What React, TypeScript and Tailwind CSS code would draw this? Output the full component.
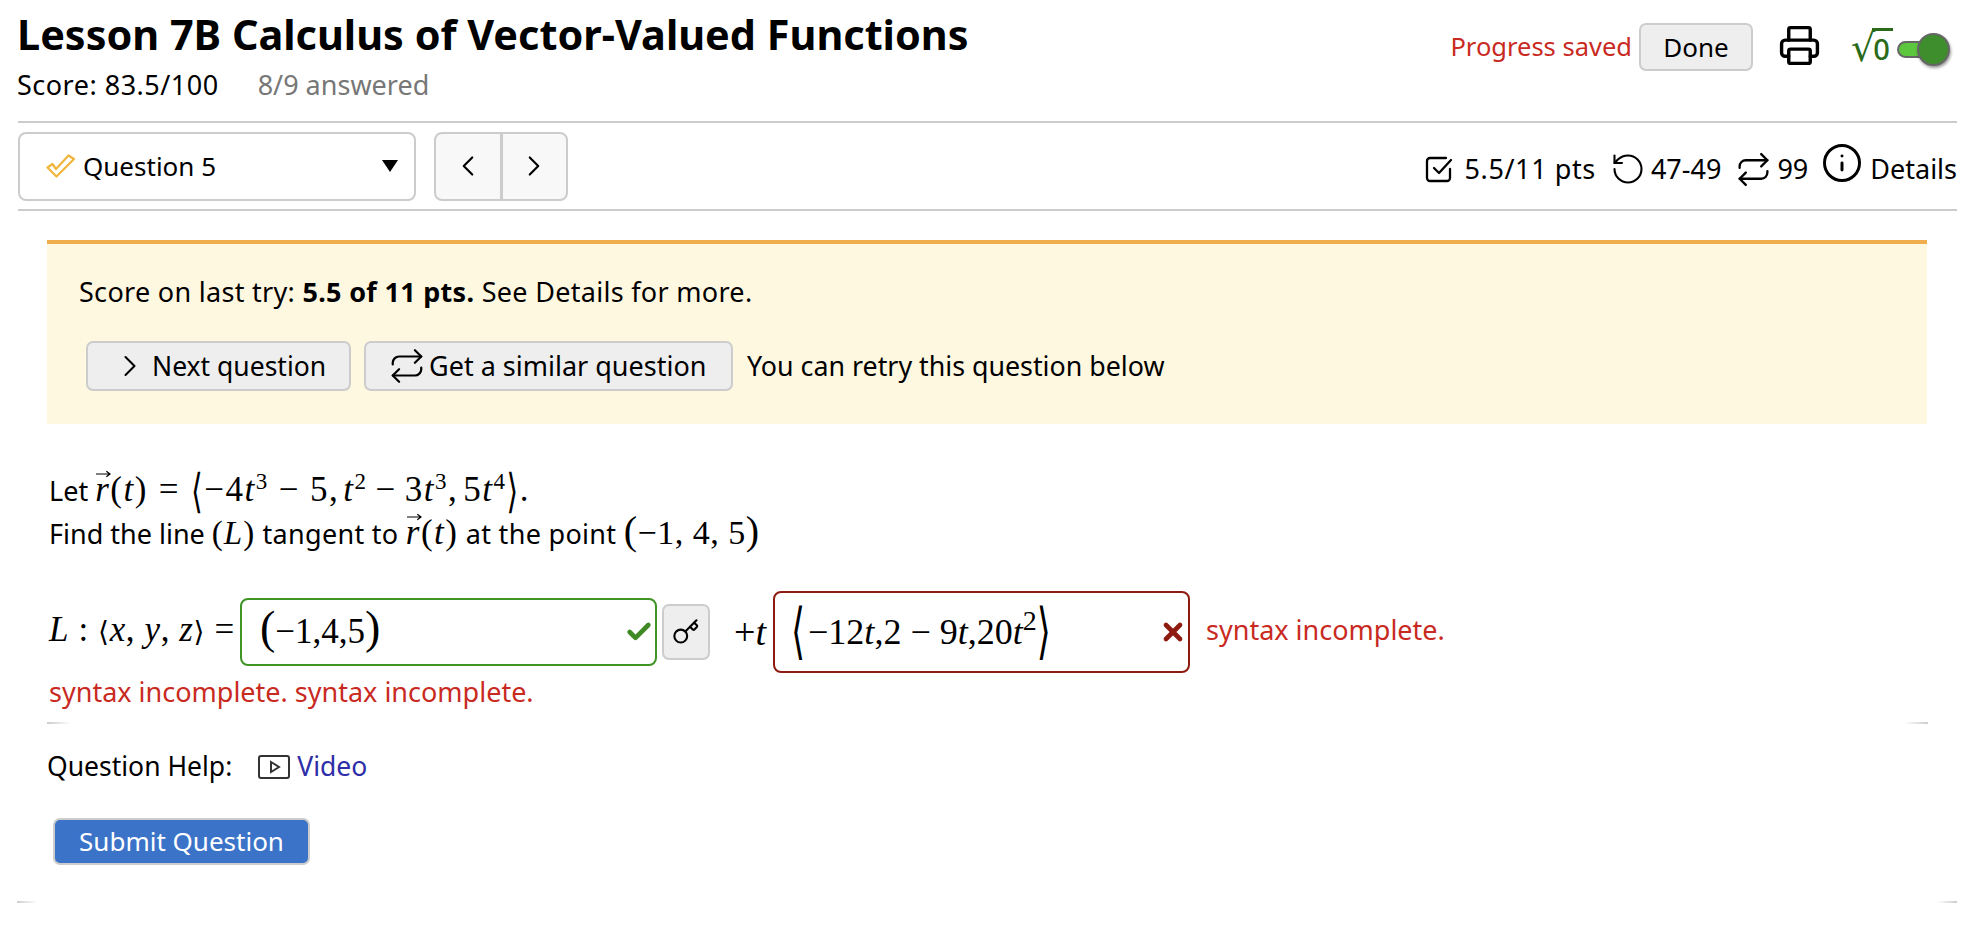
import React from 'react';
import { ChevronLeft, ChevronRight, Printer, RotateCcw, Repeat, Info, Check, X, Key } from 'lucide-react';

const sans = "font-['Noto_Sans','Lato',sans-serif]";
const serif = "font-['Liberation_Serif','DejaVu_Serif',serif]";

function I({ children }: { children: React.ReactNode }) {
  return <span className="italic">{children}</span>;
}

function VecR() {
  return (
    <span className="relative inline-block italic">
      r
      <svg viewBox="0 0 16 8" className="absolute left-[1px] top-[1px] w-[15px] h-[8px]" fill="none" stroke="currentColor" strokeWidth="1.3">
        <path d="M0 4h15M11 1l4 3-4 3" />
      </svg>
    </span>
  );
}

function Sup({ children }: { children: React.ReactNode }) {
  return <sup className="relative top-[-12px] align-baseline text-[23px] leading-none">{children}</sup>;
}

// tall thin angle bracket, scaled from the font glyph
function Angle({ ch, className }: { ch: string; className: string }) {
  return <span className={`inline-block font-['DejaVu_Sans',sans-serif] leading-none origin-center ${className}`}>{ch}</span>;
}

function Btn({ className, children }: { className: string; children: React.ReactNode }) {
  return (
    <button className={`flex items-center border-2 border-[#ccc] bg-[#eee] rounded-[7px] text-black ${className}`}>
      {children}
    </button>
  );
}

export default function App() {
  return (
    <div className={`${sans} bg-white text-black w-[1974px] h-[942px] overflow-hidden pl-[18px] pr-[17px] text-[27px]`}>
      {/* top */}
      <div className="flex justify-between h-[121px]">
        <div>
          <h1 className="text-[41.4px] font-bold leading-[48px] pt-[10px] h-[60px] whitespace-nowrap -ml-[1px]">Lesson 7B Calculus of Vector-Valued Functions</h1>
          <div className="flex mt-[10px] leading-[30px]">
            <span className="tracking-[0.5px] -ml-[1px]">Score: 83.5/100</span>
            <span className="ml-[39px] text-[#777]">8/9 answered</span>
          </div>
        </div>
        <div className="flex items-start pt-[23px] justify-end pr-[27px]">
          <span className="text-[#c92a1f] text-[25.5px] leading-[46px]">Progress saved</span>
          <Btn className="ml-[7px] w-[114px] h-[48px] justify-center text-[26px]">Done</Btn>
          <Printer className="ml-[25px] mt-[1px] w-[43px] h-[43px]" strokeWidth={1.9} />
          <div className="ml-[32px] mt-[5px] flex items-start text-[#2a6a18] w-[40px] h-[36px]">
            <span className="font-['DejaVu_Sans',sans-serif] text-[38px] leading-[40px] -ml-[2px]">√</span>
            <span className="ml-[-3px] border-t-[3px] border-[#2a6a18] w-[21px] pl-[1px] font-medium text-[29px] leading-[36px]">0</span>
          </div>
          <div className="relative ml-[4px] mt-[18px] w-[33px] h-[17px] rounded-full bg-[#5cc63c] border-2 border-[#666]">
            <div className="absolute left-[18px] top-[-10px] w-[33px] h-[33px] rounded-full bg-[#3e8e2e] border-2 border-[#666] shadow-[1px_2px_3px_rgba(0,0,0,0.4)]" />
          </div>
        </div>
      </div>
      {/* question nav */}
      <div className="flex justify-between items-center h-[90px] border-y-2 border-[#ccc]">
        <div className="flex items-center">
          <div className="flex items-center w-[398px] h-[69px] border-2 border-[#ccc] rounded-[8px] pl-[26px] pr-[16px] text-[26px]">
            <svg viewBox="0 0 30 24" className="w-[30px] h-[24px]" fill="none" stroke="#f0b63c" strokeWidth="2.2" strokeLinejoin="round">
              <path d="M1.5 13.5l5-3.5 3.5 5L22.5 1.5l5.5 3.5L10.5 22.5z" />
            </svg>
            <span className="ml-[7px]">Question 5</span>
            <span className="ml-auto w-0 h-0 border-x-[8px] border-x-transparent border-t-[12px] border-t-black" />
          </div>
          <div className="flex ml-[18px] h-[69px] w-[134px] border-2 border-[#ccc] rounded-[8px] bg-[#f8f8f8]">
            <div className="flex-1 flex items-center justify-center border-r-[3px] border-[#ccc]">
              <ChevronLeft className="w-[34px] h-[34px]" strokeWidth={1.5} />
            </div>
            <div className="flex-1 flex items-center justify-center">
              <ChevronRight className="w-[34px] h-[34px]" strokeWidth={1.5} />
            </div>
          </div>
        </div>
        <div className="flex items-center leading-[30px] pt-[6px]">
          <svg viewBox="0 0 28 28" className="w-[28px] h-[28px]" fill="none" stroke="currentColor" strokeWidth="2.3" strokeLinecap="round" strokeLinejoin="round">
            <path d="M25 14v9a3 3 0 0 1-3 3H5a3 3 0 0 1-3-3V6a3 3 0 0 1 3-3h16" />
            <path d="M9 13l5 5L26 5" />
          </svg>
          <span className="ml-[12px] tracking-[0.6px]">5.5/11 pts</span>
          <RotateCcw className="ml-[14px] w-[36px] h-[36px]" strokeWidth={1.4} />
          <span className="ml-[5px]">47-49</span>
          <Repeat className="ml-[14px] w-[37px] h-[37px]" strokeWidth={1.5} />
          <span className="ml-[5px]">99</span>
          <Info className="ml-[13px] w-[42px] h-[42px] mt-[-12px]" strokeWidth={1.7} />
          <span className="ml-[7px]">Details</span>
        </div>
      </div>
      {/* score alert */}
      <div className="ml-[29px] mr-[30px] mt-[29px] h-[184px] border-t-4 border-[#f0ad4e] bg-[#fff8e0]">
        <div className="pl-[32px] pt-[30px] leading-[36px] tracking-[0.3px]">
          Score on last try: <b className="font-bold">5.5 of 11 pts.</b> See Details for more.
        </div>
        <div className="flex items-center mt-[31px] pl-[39px]">
          <Btn className="w-[265px] h-[50px] pl-[24px] text-[26.5px]">
            <ChevronRight className="w-[36px] h-[36px]" strokeWidth={1.4} />
            <span className="ml-[4px] pt-[1px]">Next question</span>
          </Btn>
          <Btn className="ml-[13px] w-[369px] h-[50px] pl-[22px]">
            <Repeat className="w-[38px] h-[38px] shrink-0" strokeWidth={1.4} />
            <span className="ml-[3px]">Get a similar question</span>
          </Btn>
          <span className="ml-[14px] text-[26.8px]">You can retry this question below</span>
        </div>
      </div>
      {/* question */}
      <div className="mx-[29px]">
        <div className="pl-[2px] pt-[45px] leading-[42px]">
          <div className="flex items-baseline h-[42px]">
            <span>Let</span>
            <span className={`${serif} ml-[7px] text-[35px] tracking-[1.5px] whitespace-pre`}>
              <VecR />(<I>t</I>)
              <span className="ml-[11px]">=</span>
              <Angle ch="⟨" className="ml-[11px] text-[30px] scale-y-[1.55]" />
              −4<I>t</I><Sup>3</Sup>
              <span className="mx-[10px]">−</span>
              5,<span className="ml-[4px]" /><I>t</I><Sup>2</Sup>
              <span className="mx-[8px]">−</span>
              3<I>t</I><Sup>3</Sup>,<span className="ml-[5px]" />5<I>t</I><Sup>4</Sup>
              <Angle ch="⟩" className="text-[30px] scale-y-[1.55]" />.
            </span>
          </div>
          <div className="flex items-baseline h-[42px] whitespace-pre">
            <span>Find the line </span>
            <span className={`${serif} text-[33px] tracking-[1px]`}>(<I>L</I>)</span>
            <span className="tracking-[0.3px]"> tangent to </span>
            <span className={`${serif} text-[35px] tracking-[1.5px]`}><VecR />(<I>t</I>)</span>
            <span className="tracking-[0.3px]"> at the point </span>
            <span className={`${serif} text-[34px] tracking-[0.5px]`}><span className="text-[40px] leading-none">(</span>−1, 4, 5<span className="text-[40px] leading-none">)</span></span>
          </div>
        </div>
        <div className="flex items-center mt-[38px] h-[82px] pl-[2px]">
          <span className={`${serif} text-[35px] whitespace-pre w-[191px] tracking-[0.6px] mb-[4px]`}>
            <I>L</I> : <span className="font-['DejaVu_Sans',sans-serif] text-[28px]">⟨</span><I>x</I>, <I>y</I>, <I>z</I><span className="font-['DejaVu_Sans',sans-serif] text-[28px]">⟩</span> =
          </span>
          <div className={`${serif} flex items-center w-[417px] h-[68px] border-2 border-[#3f9426] rounded-[8px] pl-[18px] pr-[2px] text-[35px] whitespace-pre`}>
            <span><span className="text-[46px] leading-none">(</span>−1,4,5<span className="text-[46px] leading-none">)</span></span>
            <Check className="ml-auto w-[28px] h-[28px] text-[#3f8a24]" strokeWidth={4} />
          </div>
          <div className="flex items-center justify-center ml-[5px] w-[48px] h-[56px] border-2 border-[#ccc] bg-[#eee] rounded-[7px]">
            <Key className="w-[28px] h-[28px]" strokeWidth={1.8} />
          </div>
          <span className={`${serif} ml-[24px] text-[38px] whitespace-pre w-[39px]`}>+<I>t</I></span>
          <div className={`${serif} flex items-center w-[417px] h-[82px] border-2 border-[#8e1a10] rounded-[8px] pl-[16px] pr-[1px] text-[36px] whitespace-pre`}>
            <span>
              <Angle ch="⟨" className="mr-[3px] text-[36px] scale-y-[1.7]" />
              −12<I>t</I>,2 − 9<I>t</I>,20<I>t</I><sup className="text-[28px] leading-none">2</sup>
              <Angle ch="⟩" className="text-[36px] scale-y-[1.7]" />
            </span>
            <X className="ml-auto w-[28px] h-[28px] text-[#8e1a10]" strokeWidth={4} />
          </div>
          <span className="ml-[16px] mb-[3px] text-[#c92a1f]">syntax incomplete.</span>
        </div>
        <div className="pl-[2px] mt-[1px] leading-[36px] text-[#c92a1f]">syntax incomplete. syntax incomplete.</div>
        <div className="flex justify-between mt-[12px] h-[2px]">
          <div className="w-[24px] bg-gradient-to-r from-[#ccc] to-white" />
          <div className="w-[24px] bg-gradient-to-l from-[#ccc] to-white" />
        </div>
        <div className="flex items-center mt-[27px] h-[32px] text-[26.5px]">
          <span>Question Help:</span>
          <svg viewBox="0 0 32 24" className="ml-[26px] w-[32px] h-[24px]" fill="none" stroke="#333" strokeWidth="2">
            <rect x="1" y="1" width="30" height="22" rx="2" />
            <path d="M13 7l8 5-8 5z" />
          </svg>
          <span className="ml-[7px] text-[#2e2ea8]">Video</span>
        </div>
        <button className="mt-[35px] ml-[6px] w-[257px] h-[47px] bg-[#3b73c9] border-2 border-[#ccc] rounded-[7px] text-white text-[26px]">Submit Question</button>
      </div>
      <div className="flex justify-between mt-[36px] -ml-[1px] h-[2px]">
        <div className="w-[20px] bg-gradient-to-r from-[#ccc] to-white" />
        <div className="w-[20px] bg-gradient-to-l from-[#ccc] to-white" />
      </div>
    </div>
  );
}
